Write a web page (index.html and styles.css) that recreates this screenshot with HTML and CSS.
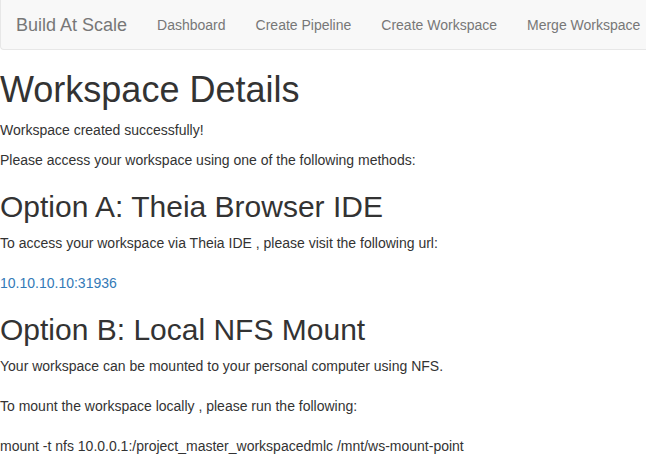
FILE: index.html
```html
<!DOCTYPE html>
<html>
<head>
<meta charset="utf-8">
<link rel="stylesheet" href="styles.css">
</head>
<body>
<nav class="navbar">
  <a class="brand" href="#">Build At Scale</a>
  <ul class="nav">
    <li><a href="#">Dashboard</a></li>
    <li><a href="#">Create Pipeline</a></li>
    <li><a href="#">Create Workspace</a></li>
    <li><a href="#">Merge Workspace</a></li>
  </ul>
</nav>
<main class="content">
  <h1>Workspace Details</h1>
  <p>Workspace created successfully!</p>
  <p>Please access your workspace using one of the following methods:</p>
  <h2>Option A: Theia Browser IDE</h2>
  <p>To access your workspace via Theia IDE , please visit the following url:<br><br><a class="link" href="#">10.10.10.10:31936</a></p>
  <h2>Option B: Local NFS Mount</h2>
  <p>Your workspace can be mounted to your personal computer using NFS.<br><br>To mount the workspace locally , please run the following:<br><br>mount -t nfs 10.0.0.1:/project_master_workspacedmlc /mnt/ws-mount-point</p>
</main>
</body>
</html>
```
FILE: styles.css
```css
html, body {
  margin: 0;
  padding: 0;
  overflow: hidden;
}
body {
  font-family: "Liberation Sans", Arial, Helvetica, sans-serif;
  font-size: 14px;
  line-height: 20px;
  color: #333333;
  background: #ffffff;
}
.navbar {
  display: flex;
  align-items: stretch;
  height: 49px;
  background: #f8f8f8;
  border-left: 1px solid #e7e7e7;
  border-bottom: 1px solid #e7e7e7;
  border-radius: 0 0 0 4px;
  margin-bottom: 20px;
  white-space: nowrap;
  overflow: hidden;
}
.brand {
  display: block;
  flex: none;
  padding: 15px 15px 14px 15px;
  font-size: 18px;
  line-height: 20px;
  color: #777777;
  text-decoration: none;
}
.nav {
  display: flex;
  flex: none;
  margin: 0;
  padding: 0;
  list-style: none;
}
.nav a {
  display: block;
  padding: 15px 15px 14px 15px;
  line-height: 20px;
  color: #777777;
  text-decoration: none;
}
.content h1 {
  font-size: 36px;
  font-weight: 500;
  line-height: 1.1;
  margin: 20px 0 10px;
}
.content h2 {
  font-size: 30px;
  font-weight: 500;
  line-height: 1.1;
  margin: 20px 0 10px;
}
.content p {
  margin: 0 0 10px;
}
.link {
  color: #337ab7;
  text-decoration: none;
}
```
